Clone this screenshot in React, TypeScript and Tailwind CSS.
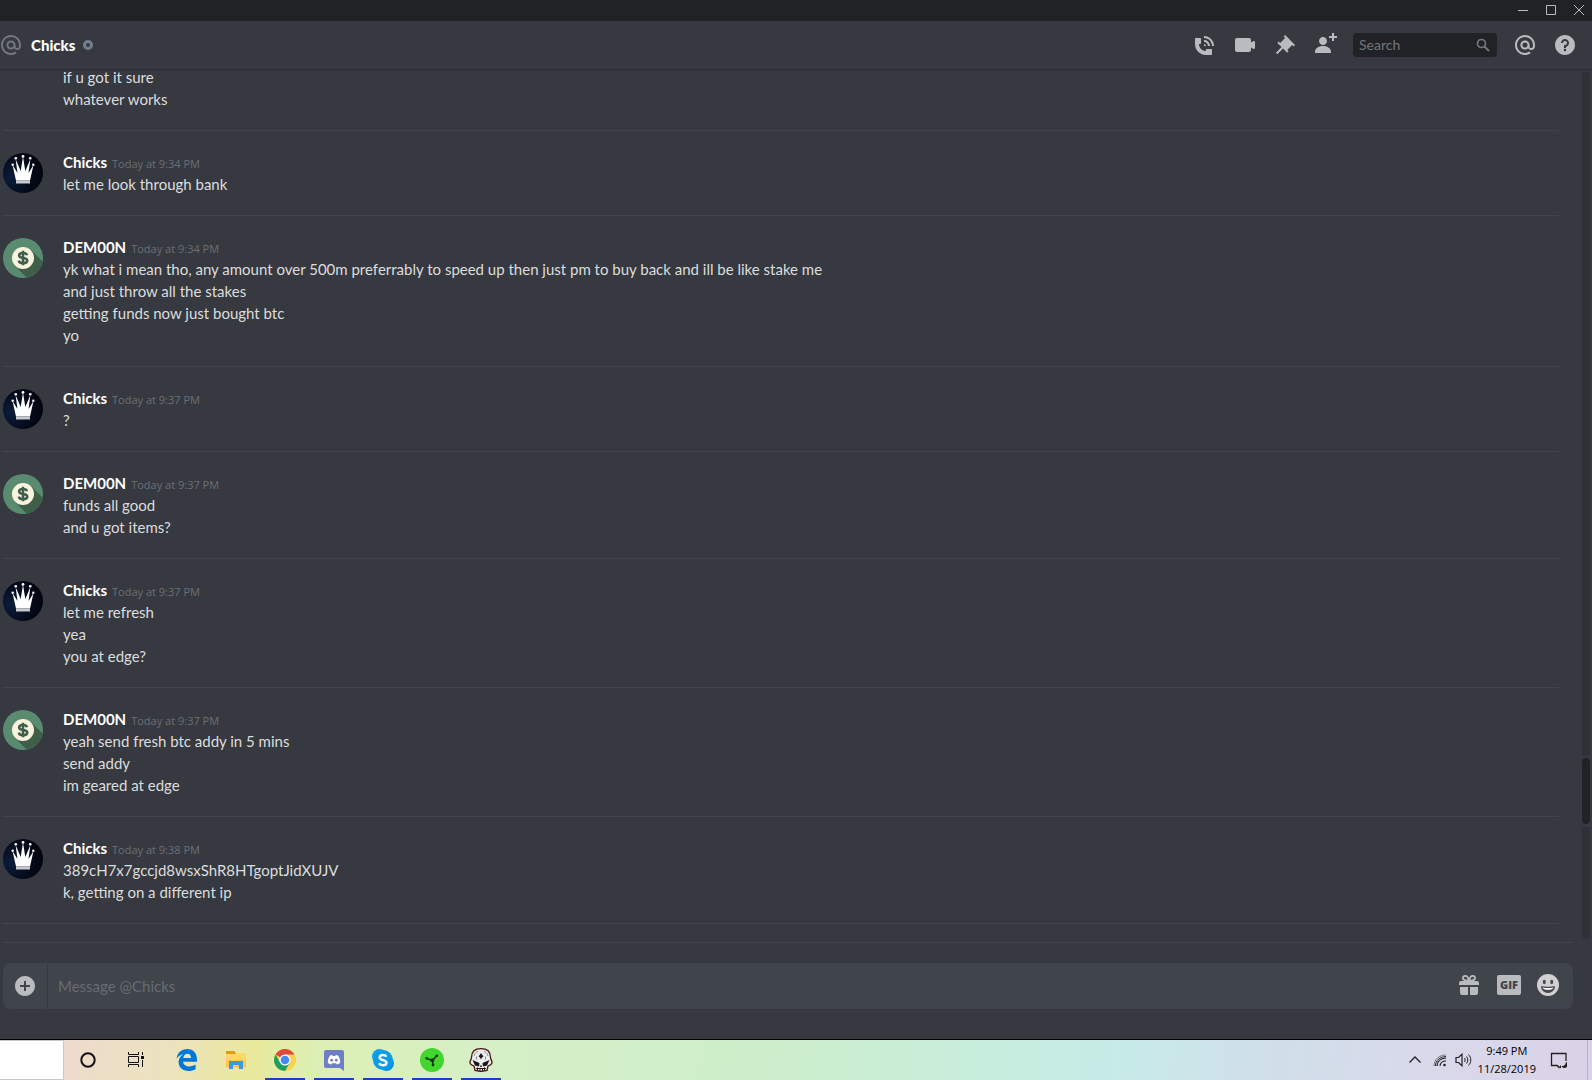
import type { ReactNode } from "react";

type Author = "Chicks" | "DEM00N";

interface Group {
  author: Author;
  time: string;
  lines: string[];
}

const groups: Group[] = [
  { author: "Chicks", time: "Today at 9:34 PM", lines: ["let me look through bank"] },
  {
    author: "DEM00N",
    time: "Today at 9:34 PM",
    lines: [
      "yk what i mean tho, any amount over 500m preferrably to speed up then just pm to buy back and ill be like stake me",
      "and just throw all the stakes",
      "getting funds now just bought btc",
      "yo",
    ],
  },
  { author: "Chicks", time: "Today at 9:37 PM", lines: ["?"] },
  { author: "DEM00N", time: "Today at 9:37 PM", lines: ["funds all good", "and u got items?"] },
  { author: "Chicks", time: "Today at 9:37 PM", lines: ["let me refresh", "yea", "you at edge?"] },
  {
    author: "DEM00N",
    time: "Today at 9:37 PM",
    lines: ["yeah send fresh btc addy in 5 mins", "send addy", "im geared at edge"],
  },
  {
    author: "Chicks",
    time: "Today at 9:38 PM",
    lines: ["389cH7x7gccjd8wsxShR8HTgoptJidXUJV", "k, getting on a different ip"],
  },
];

const AT_PATH =
  "M12 2C6.486 2 2 6.486 2 12C2 17.515 6.486 22 12 22C14.039 22 15.993 21.398 17.652 20.259L16.521 18.611C15.195 19.519 13.633 20 12 20C7.589 20 4 16.411 4 12C4 7.589 7.589 4 12 4C16.411 4 20 7.589 20 12V12.782C20 14.17 19.402 15 18.4 15L18.398 15.018C18.338 15.005 18.273 15 18.209 15H18C17.437 15 16.6 14.182 16.6 13.631V12C16.6 9.464 14.537 7.4 12 7.4C9.463 7.4 7.4 9.463 7.4 12C7.4 14.537 9.463 16.6 12 16.6C13.234 16.6 14.35 16.106 15.177 15.313C15.826 16.269 16.93 17 18 17L18.002 16.981C18.064 16.994 18.129 17 18.195 17H18.4C20.552 17 22 15.306 22 12.782V12C22 6.486 17.514 2 12 2ZM12 14.599C10.566 14.599 9.4 13.433 9.4 11.999C9.4 10.565 10.566 9.399 12 9.399C13.434 9.399 14.6 10.565 14.6 11.999C14.6 13.433 13.434 14.599 12 14.599Z";
const PHONE_PATH =
  "M11 5V3C16.515 3 21 7.486 21 13H19C19 8.589 15.411 5 11 5ZM17 13H15C15 10.795 13.206 9 11 9V7C14.309 7 17 9.691 17 13ZM11 11V13H13C13 11.896 12.105 11 11 11ZM14 16H18C18.553 16 19 16.447 19 17V21C19 21.553 18.553 22 18 22H13C6.925 22 2 17.075 2 11V6C2 5.447 2.448 5 3 5H7C7.553 5 8 5.447 8 6V10C8 10.553 7.553 11 7 11H6C6.063 14.938 9 18 13 18V17C13 16.447 13.447 16 14 16Z";
const VIDEO_PATH =
  "M21.526 8.149C21.231 7.966 20.862 7.951 20.553 8.105L18 9.382V7C18 5.897 17.103 5 16 5H4C2.897 5 2 5.897 2 7V17C2 18.104 2.897 19 4 19H16C17.103 19 18 18.104 18 17V14.618L20.553 15.894C20.694 15.965 20.847 16 21 16C21.183 16 21.365 15.949 21.526 15.851C21.82 15.668 22 15.347 22 15V9C22 8.653 21.82 8.332 21.526 8.149Z";
const PIN_PATH =
  "M22 12L12.101 2.10101L10.686 3.51401L12.101 4.92901L7.15096 9.87801V9.88001L5.73596 8.46501L4.32196 9.88001L8.56496 14.122L2.90796 19.778L4.32196 21.192L9.97896 15.536L14.222 19.778L15.636 18.364L14.222 16.95L19.171 12H19.172L20.586 13.414L22 12Z";
const ADD_FRIEND_PATH =
  "M21 3H24V5H21V8H19V5H16V3H19V0H21V3ZM10 12C12.205 12 14 10.205 14 8C14 5.795 12.205 4 10 4C7.795 4 6 5.795 6 8C6 10.205 7.795 12 10 12ZM10 13C5.289 13 2 15.467 2 19V20H18V19C18 15.467 14.711 13 10 13Z";
const HELP_PATH =
  "M12 2C6.486 2 2 6.487 2 12C2 17.515 6.486 22 12 22C17.514 22 22 17.515 22 12C22 6.487 17.514 2 12 2ZM12 18.25C11.31 18.25 10.75 17.691 10.75 17C10.75 16.31 11.31 15.75 12 15.75C12.69 15.75 13.25 16.31 13.25 17C13.25 17.691 12.69 18.25 12 18.25ZM13 13.875V15H11V12H12C13.104 12 14 11.103 14 10C14 8.896 13.104 8 12 8C10.896 8 10 8.896 10 10H8C8 7.795 9.795 6 12 6C14.205 6 16 7.795 16 10C16 11.861 14.723 13.429 13 13.875Z";
const PLUS_PATH =
  "M12 2C6.486 2 2 6.487 2 12C2 17.515 6.486 22 12 22C17.514 22 22 17.515 22 12C22 6.487 17.514 2 12 2ZM17 13H13V17H11V13H7V11H11V7H13V11H17V13Z";

function PathIcon({ d }: { d: string }) {
  return (
    <svg viewBox="0 0 24 24" className="size-6 shrink-0" fill="currentColor" aria-hidden="true">
      <path fillRule="evenodd" clipRule="evenodd" d={d} />
    </svg>
  );
}

function IconButton({ label, d }: { label: string; d: string }) {
  return (
    <button type="button" aria-label={label} className="text-[#b9bbbe]">
      <PathIcon d={d} />
    </button>
  );
}

function CrownAvatar() {
  return (
    <svg viewBox="0 0 40 40" className="size-10 shrink-0" aria-hidden="true">
      <defs>
        <radialGradient id="night" cx="0.2" cy="0.6" r="0.8">
          <stop offset="0" stopColor="#0b1c3a" />
          <stop offset="0.6" stopColor="#050b1c" />
          <stop offset="1" stopColor="#02040e" />
        </radialGradient>
      </defs>
      <circle cx="20" cy="20" r="20" fill="url(#night)" />
      <path
        fill="#fff"
        d="M9.500 12L14.500 20L12.600 6L17.700 18L20 3.500L22.300 18L27.400 6L25.500 20L30.500 12L27 27.500H13Z"
      />
      <g fill="#fff">
        <circle cx="9.700" cy="11.800" r="1.200" />
        <circle cx="12.800" cy="5.200" r="1.300" />
        <circle cx="20" cy="3.400" r="1.400" />
        <circle cx="27.200" cy="5.200" r="1.300" />
        <circle cx="30.300" cy="11.800" r="1.200" />
      </g>
      <rect x="13" y="27.500" width="14" height="3" fill="#c9cacd" />
    </svg>
  );
}

function MoneyAvatar() {
  return (
    <svg viewBox="0 0 40 40" className="size-10 shrink-0" aria-hidden="true">
      <clipPath id="coin">
        <circle cx="20" cy="20" r="20" />
      </clipPath>
      <g clipPath="url(#coin)">
        <rect width="40" height="40" fill="#5a8a70" />
        <path d="M28 12L46 30L30 46L12 28Z" fill="#3f5f4a" />
      </g>
      <circle cx="20" cy="20" r="11" fill="#f8f2de" />
      <path
        d="M24 17.200C23.600 15.700 22 15 20 15C17.700 15 16.100 15.900 16.100 17.500C16.100 21.300 24.300 18.600 24.300 22.500C24.300 24.200 22.500 25.200 20.100 25.200C17.800 25.200 16.100 24.300 15.700 22.600M20 12.800V27.200"
        fill="none"
        stroke="#3f5f4a"
        strokeWidth="2.500"
      />
    </svg>
  );
}

function MessageGroup({ author, time, lines }: Group) {
  return (
    <article className="flex gap-5 border-b border-[#43454a] py-5">
      <div className="h-10 pt-0.5">{author === "Chicks" ? <CrownAvatar /> : <MoneyAvatar />}</div>
      <div className="min-w-0 flex-1">
        <h2 className="flex h-[22px] items-baseline gap-[5px]">
          <span className="text-[15px] font-bold text-white">{author}</span>
          <time className="font-['Open_Sans',sans-serif] text-[11px] text-[#6b6f77]">{time}</time>
        </h2>
        {lines.map((line) => (
          <p key={line}>{line}</p>
        ))}
      </div>
    </article>
  );
}

function TitleBar() {
  return (
    <div className="flex h-[21px] shrink-0 items-center justify-end gap-[18px] bg-[#202225] pr-2 pb-px text-[#b9bbbe]">
      <button type="button" aria-label="Minimize">
        <svg viewBox="0 0 10 10" className="size-2.5" aria-hidden="true">
          <path d="M0 5.500H10" stroke="currentColor" />
        </svg>
      </button>
      <button type="button" aria-label="Maximize">
        <svg viewBox="0 0 10 10" className="size-2.5" aria-hidden="true">
          <path d="M0.500 0.500H9.500V9.500H0.500Z" stroke="currentColor" fill="none" />
        </svg>
      </button>
      <button type="button" aria-label="Close">
        <svg viewBox="0 0 10 10" className="size-2.5" aria-hidden="true">
          <path d="M0 0L10 10M10 0L0 10" stroke="currentColor" />
        </svg>
      </button>
    </div>
  );
}

function Header() {
  return (
    <header className="z-10 flex h-12 shrink-0 items-center pr-[15px] shadow-[0_1px_0_#2c2e33,0_2px_0_#323439]">
      <span className="-ml-px text-[#72767d]">
        <PathIcon d={AT_PATH} />
      </span>
      <h1 className="ml-2 text-[15px] font-black text-white">Chicks</h1>
      <span role="img" aria-label="Offline" className="ml-2 size-2.5 rounded-full border-[3px] border-[#747f8d]" />
      <div className="ml-auto flex items-center gap-4">
        <IconButton label="Start voice call" d={PHONE_PATH} />
        <IconButton label="Start video call" d={VIDEO_PATH} />
        <IconButton label="Pinned messages" d={PIN_PATH} />
        <IconButton label="Add friends to DM" d={ADD_FRIEND_PATH} />
        <label className="flex h-6 w-36 items-center rounded bg-[#202225] pr-[7px] pl-1.5 text-[#72767d]">
          <input
            type="text"
            aria-label="Search"
            placeholder="Search"
            className="w-full min-w-0 bg-transparent text-sm placeholder:text-[#72767d] focus:outline-none"
          />
          <svg viewBox="0 0 14 14" className="size-3.5 shrink-0" fill="none" stroke="currentColor" aria-hidden="true">
            <circle cx="5.500" cy="5.500" r="4" strokeWidth="1.700" />
            <path d="M8.500 8.500L13 13" strokeWidth="2" />
          </svg>
        </label>
        <IconButton label="Mentions" d={AT_PATH} />
        <IconButton label="Help" d={HELP_PATH} />
      </div>
    </header>
  );
}

function Composer() {
  return (
    <form className="mr-[19px] ml-[3px] shrink-0 border-t border-[#43454a] pt-5 pb-[30px]">
      <div className="flex h-[46px] items-center rounded-lg bg-[#40444b]">
        <button
          type="button"
          aria-label="Upload a file"
          className="flex h-full w-[45px] items-center justify-center border-r border-[#36393f] text-[#b9bbbe]"
        >
          <PathIcon d={PLUS_PATH} />
        </button>
        <input
          type="text"
          aria-label="Message @Chicks"
          placeholder="Message @Chicks"
          className="h-full min-w-0 flex-1 bg-transparent px-2.5 text-[15px] text-[#dcddde] placeholder:text-[#686c73] focus:outline-none"
        />
        <div className="flex items-center gap-[18px] pr-3.5 pb-0.5 text-[#b9bbbe]">
          <button type="button" aria-label="Send a gift">
            <svg viewBox="0 0 20 22" className="h-[22px] w-5" aria-hidden="true">
              <g fill="none" stroke="currentColor" strokeWidth="1.800">
                <path d="M9.800 7C9.500 4.500 8.500 1.900 6.200 1.900C4.600 1.900 3.800 3 3.900 4.100C4.100 6 6.500 6.700 9.800 7Z" />
                <path d="M10.200 7C10.500 4.500 11.500 1.900 13.800 1.900C15.400 1.900 16.200 3 16.100 4.100C15.900 6 13.500 6.700 10.200 7Z" />
              </g>
              <path
                fill="currentColor"
                d="M2 7H18A2 2 0 0 1 20 9V11H0V9A2 2 0 0 1 2 7ZM1 13H9V21H3A2 2 0 0 1 1 19ZM11 13H19V19A2 2 0 0 1 17 21H11Z"
              />
            </svg>
          </button>
          <button
            type="button"
            aria-label="Open GIF picker"
            className="flex h-5 w-6 items-center justify-center rounded-xs bg-[#b9bbbe] font-['Open_Sans',sans-serif] text-[11px] font-extrabold text-[#40444b]"
          >
            GIF
          </button>
          <button type="button" aria-label="Select emoji" className="-ml-0.5">
            <svg viewBox="0 0 22 22" className="size-[22px]" aria-hidden="true">
              <circle cx="11" cy="11" r="11" fill="#d0d0d0" />
              <ellipse cx="7.300" cy="8" rx="1.500" ry="2.200" fill="#4a4a4c" />
              <ellipse cx="14.700" cy="8" rx="1.500" ry="2.200" fill="#4a4a4c" />
              <path d="M4 12C6 13 16 13 18 12C18 16 15 19 11 19C7 19 4 16 4 12Z" fill="#4a4a4c" />
              <path d="M5.400 13.500C8 14.200 14 14.200 16.600 13.500C16 15.200 14 15.800 11 15.800C8 15.800 6 15.200 5.400 13.500Z" fill="#fff" />
            </svg>
          </button>
        </div>
      </div>
    </form>
  );
}

function TaskButton({ label, open = false, children }: { label: string; open?: boolean; children: ReactNode }) {
  return (
    <button
      type="button"
      aria-label={label}
      className={
        open
          ? "relative flex h-full w-12 items-center justify-center after:absolute after:inset-x-1 after:bottom-0 after:h-0.5 after:bg-[#1e3fc0]"
          : "flex h-full w-12 items-center justify-center"
      }
    >
      <svg viewBox="0 0 24 24" className="size-6" aria-hidden="true">
        {children}
      </svg>
    </button>
  );
}

function Taskbar() {
  return (
    <footer className="flex h-[41px] shrink-0 items-stretch border-t border-black bg-[linear-gradient(100deg,#eddacd_0%,#eddccb_5%,#ece3bd_11%,#e9e99c_16%,#dcefb4_20%,#d6efc6_30%,#cdeecb_48%,#c8eedb_60%,#c6ebe8_70%,#d0dfea_79%,#d9d9ea_90%,#dad2e8_100%)] text-black">
      <div className="w-16 border border-l-0 border-[#c8c8c8] bg-white" />
      <TaskButton label="Cortana">
        <circle cx="12" cy="12" r="6.700" fill="none" stroke="#111" strokeWidth="2" />
      </TaskButton>
      <TaskButton label="Task View">
        <path
          d="M4.500 4V6.500H14.500V4M4.500 19V16.500H14.500V19M4.500 8.500H14.500V14.500H4.500ZM18.500 4V7M18.500 12V19"
          fill="none"
          stroke="#111"
        />
        <rect x="17" y="8" width="3" height="3" fill="#111" />
      </TaskButton>
      <div className="ml-[3px] flex gap-px">
        <TaskButton label="Microsoft Edge">
          <path
            fill="#0078d7"
            d="M1.500 10.800C2.200 4.800 6.500 1 12.300 1C18.500 1 22 5.600 22 11.200V13.700H8.200C8.400 17 11.200 18.400 14.300 18.400C16.800 18.400 18.900 17.700 20.600 16.600V21.200C18.600 22.400 16.200 23 13.600 23C7.600 23 3.600 19.400 3.600 14.100C3.600 10.600 5.600 7.700 8.700 6.300C5.400 6.700 3 8.400 1.500 10.800ZM8.300 9.900H16C16 7.300 14.700 5.700 12.400 5.700C10.100 5.700 8.600 7.500 8.300 9.900Z"
          />
        </TaskButton>
        <TaskButton label="File Explorer">
          <path d="M2 3H10L12 5H22V20H2Z" fill="#ffd866" />
          <path d="M2 3H10.500L12 6H2Z" fill="#dd9d17" />
          <path d="M2 12H22V19H2Z" fill="#fcc84e" />
          <path d="M5 21V13H19V21H15V17H9V21Z" fill="#3f97dc" />
        </TaskButton>
        <TaskButton label="Google Chrome" open>
          <circle cx="12" cy="12" r="11" fill="#fcd04f" />
          <path d="M12 12L2.500 6.500A11 11 0 0 1 21.500 6.500H12Z" fill="#dc4a3d" />
          <path d="M2.500 6.500A11 11 0 0 0 12 23L16.800 14.800L7.200 14.800Z" fill="#1aa15f" />
          <circle cx="12" cy="12" r="5.600" fill="#fff" />
          <circle cx="12" cy="12" r="4.300" fill="#4688f1" />
        </TaskButton>
        <TaskButton label="Discord" open>
          <path d="M4 2H20A2 2 0 0 1 22 4V23L18 20H4A2 2 0 0 1 2 18V4A2 2 0 0 1 4 2Z" fill="#6f7fc5" />
          <path
            d="M8 7.500L10.200 7L10.700 8H13.300L13.800 7L16 7.500C17.700 10 18.300 12.300 18.200 14.800C17 15.800 16 16.200 14.900 16.400L14.200 15.200H9.800L9.100 16.400C8 16.200 7 15.800 5.800 14.800C5.700 12.300 6.300 10 8 7.500Z"
            fill="#fff"
          />
          <circle cx="9.700" cy="12.200" r="1.400" fill="#6f7fc5" />
          <circle cx="14.300" cy="12.200" r="1.400" fill="#6f7fc5" />
        </TaskButton>
        <TaskButton label="Skype" open>
          <circle cx="8.500" cy="8.500" r="7.500" fill="#0ba5ea" />
          <circle cx="15.500" cy="15.500" r="7.500" fill="#0a93dc" />
          <circle cx="12" cy="12" r="10" fill="#0a9de5" />
          <path
            d="M15.500 8.600C14.700 7.400 13.500 7 12 7C10.200 7 8.700 7.900 8.700 9.400C8.700 12.900 15.500 11.200 15.500 14.700C15.500 16.300 13.900 17.200 12 17.200C10.300 17.200 8.900 16.600 8.200 15.200"
            fill="none"
            stroke="#fff"
            strokeWidth="2.400"
          />
        </TaskButton>
        <TaskButton label="Razer Cortex" open>
          <circle cx="12" cy="12" r="12" fill="#42d62e" />
          <path d="M7 10.500L12.500 12.500L16.500 8M12.500 12.500L13 17" fill="none" stroke="#153a12" strokeWidth="1.500" />
          <circle cx="6.800" cy="10.300" r="1.400" fill="#153a12" />
          <circle cx="16.800" cy="7.800" r="1.400" fill="#153a12" />
          <circle cx="13" cy="17" r="1.400" fill="#153a12" />
          <circle cx="12.300" cy="12.300" r="2" fill="#153a12" />
        </TaskButton>
        <TaskButton label="Skull" open>
          <path
            d="M12 0.700C18 0.700 21.500 4 21.500 9.500C21.500 11 23 12.500 23 14.500C23 16.500 20.500 17.500 19 18L18 22.500L12 23.500L6 22.500L5 18C3.500 17.500 1 16.500 1 14.500C1 12.500 2.500 11 2.500 9.500C2.500 4 6 0.700 12 0.700Z"
            fill="#ececec"
            stroke="#4a1512"
            strokeWidth="1.300"
          />
          <path d="M3.500 12L10.500 15L10 18.500L6 17.500ZM20.500 12L13.500 15L14 18.500L18 17.500Z" fill="#1c1717" />
          <path d="M12 16.500L13 19H11Z" fill="#1c1717" />
          <path d="M7 20.500H17M8.500 19.500V22.500M11 20V23M13.500 20V23M15.500 19.500V22.500" stroke="#1c1717" fill="none" />
          <path d="M12 5L13.300 7L14.500 8.300L13 9.500L12 11.500L11 9.500L9.500 8.300L10.700 7Z" fill="#1c1717" />
          <path d="M5 8C5.500 5.500 7 4 9 3.500M19 8C18.500 5.500 17 4 15 3.500M7.500 11.500V8.500M16.500 11.500V8.500" stroke="#8d8d8d" fill="none" />
        </TaskButton>
      </div>
      <div className="ml-auto flex items-center font-['Open_Sans',sans-serif] text-[11px] leading-[18px]">
        <button type="button" aria-label="Show hidden icons" className="mr-[11px]">
          <svg viewBox="0 0 14 14" className="size-3.5" aria-hidden="true">
            <path d="M1.500 9.500L7 4L12.500 9.500" fill="none" stroke="#222" strokeWidth="1.300" />
          </svg>
        </button>
        <button type="button" aria-label="Network" className="mr-2">
          <svg viewBox="0 0 14 14" className="size-3.5" fill="none" stroke="#222" aria-hidden="true">
            <path d="M1 13C1.500 6 6 2.200 13 2" stroke="#777" />
            <path d="M4 13C4.300 8.500 7.500 5.300 13 5M7 13C7.200 10 9.500 8 13 8" strokeWidth="1.200" />
            <path d="M2.500 13C2.800 7.500 6.500 3.800 13 3.500" />
            <circle cx="11.500" cy="12" r="1.300" fill="#222" stroke="none" />
          </svg>
        </button>
        <button type="button" aria-label="Volume" className="mr-1.5">
          <svg viewBox="0 0 17 14" className="h-3.5 w-[17px]" fill="none" stroke="#222" aria-hidden="true">
            <path d="M1 4.500H3.500L7 1.200V12.800L3.500 9.500H1Z" strokeWidth="1.200" />
            <path d="M9.500 5C10.300 6.200 10.300 7.800 9.500 9M11.500 3.500C13.200 5.500 13.200 8.500 11.500 10.500M13.500 1.500C16.500 4.500 16.500 9.500 13.500 12.500" />
          </svg>
        </button>
        <button type="button" className="flex flex-col items-center">
          <span>9:49 PM</span>
          <span>11/28/2019</span>
        </button>
        <button type="button" aria-label="Notifications" className="mr-5 ml-3.5">
          <svg viewBox="0 0 17 17" className="size-[17px]" aria-hidden="true">
            <path d="M9.500 16L7 13.500H1.500V1.500H16V9" fill="none" stroke="#222" strokeWidth="1.300" />
            <path d="M8 13.500L10.500 16V13.500" fill="none" stroke="#222" />
            <path d="M16 10A3.200 3.200 0 1 1 11.500 14C14 14.500 15.700 12.500 16 10Z" fill="#222" />
          </svg>
        </button>
        <div className="h-full w-[5px] border-l border-[#b4b2c4]" />
      </div>
    </footer>
  );
}

export default function App() {
  return (
    <div className="flex h-screen flex-col overflow-hidden bg-[#36393f] font-['Lato',sans-serif] text-[15px] leading-[22px] text-[#dcddde]">
      <TitleBar />
      <Header />
      <main className="flex min-h-0 flex-1 flex-col">
        <div className="flex min-h-0 flex-1">
          <div className="flex min-w-0 flex-1 flex-col justify-end overflow-hidden pb-[18px] pl-[3px]">
            <div className="mr-[23px]">
              <div className="border-b border-[#43454a] pb-5 pl-[60px]">
                <p>if u got it sure</p>
                <p>whatever works</p>
              </div>
              {groups.map((group, index) => (
                <MessageGroup key={index} {...group} />
              ))}
            </div>
          </div>
          <div className="mt-[3px] mr-0.5 mb-[3px] flex w-2 flex-col gap-[3px]" aria-hidden="true">
            <div className="flex-[683] rounded-t bg-[#2f3136]" />
            <div className="h-[66px] rounded bg-[#202225]" />
            <div className="flex-[112] rounded-b bg-[#2f3136]" />
          </div>
        </div>
        <Composer />
      </main>
      <Taskbar />
    </div>
  );
}
